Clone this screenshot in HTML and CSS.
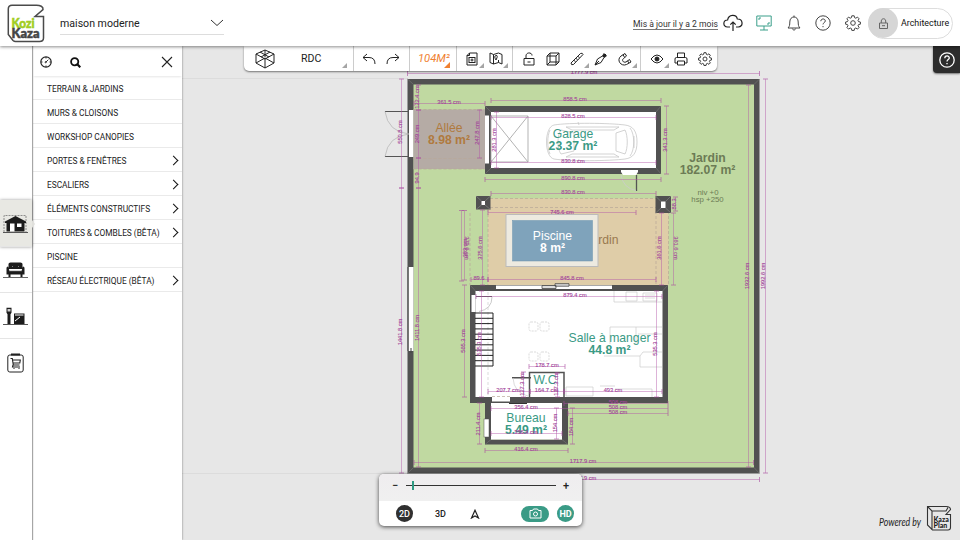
FILE: index.html
```html
<!DOCTYPE html>
<html lang="fr">
<head>
<meta charset="utf-8">
<title>KoziKaza</title>
<link rel="stylesheet" href="styles.css">
</head>
<body>
<svg class="defs" width="0" height="0">
  <defs>
    <symbol id="gear" viewBox="0 0 16 16"><path d="M6.8.8h2.4l.4 1.9 1.2.5 1.7-1.1 1.6 1.7-1.1 1.6.5 1.2 1.900.4v2.200l-1.900.4-.5 1.200 1.100 1.600-1.600 1.700-1.700-1.100-1.200.5-.4 1.900H6.800l-.4-1.900-1.200-.5-1.700 1.100-1.600-1.700L3 10.800l-.5-1.200L.6 9.200V7l1.900-.4L3 5.400 1.900 3.800l1.600-1.700 1.700 1.100 1.200-.5z"/><circle cx="8" cy="8" r="2.300"/></symbol>
    <symbol id="help" viewBox="0 0 16 16"><circle cx="8" cy="8" r="7.200"/><path d="M5.800 6.200c0-3 4.500-2.900 4.500-.2 0 1.500-2.300 1.700-2.300 3.400M8 11v1.200"/></symbol>
  </defs>
</svg>
<header class="header">
  <svg class="logo" viewBox="0 0 40 40">
    <path d="M29.500 1.200H5C2.500 1.200 1.300 2.500 1.300 5v25.500L6 36.500c.8.700 1.500 1 2.500 1h24c2.500 0 4-1.300 4-3.500V12.500H28l8-7c.5-3-3-4.300-6.500-4.300z" fill="#fff" stroke="#4a4a4a" stroke-width="1.500"/>
    <text x="4.500" y="23.800" class="logo-green" textLength="23" lengthAdjust="spacingAndGlyphs">Kozi</text>
    <text x="4.500" y="33.500" class="logo-dark" textLength="28" lengthAdjust="spacingAndGlyphs">Kaza</text>
  </svg>
  <div class="project"><span>maison moderne</span><svg width="14" height="8" viewBox="0 0 14 8"><path d="M1 1l6 5.500L13 1"/></svg></div>
  <div class="actions">
    <span class="updated">Mis à jour il y a 2 mois</span>
    <svg class="cloud" viewBox="0 0 20 18"><path d="M7 13H4.500C-.5 12.500-.2 6 4.600 6 5.500 0 13.500 0 14.300 5c5.700-.2 6.500 7.300 1 8H13M10 17V8M7.300 10.700L10 8l2.700 2.700"/></svg>
    <svg class="screen" viewBox="0 0 16 16"><path d="M.8 1h14.400v10H.8zM8 11v4M4 15h8M3 5V3h2M11 9h2V7"/></svg>
    <svg class="bell" viewBox="0 0 14 16"><path d="M1 13c1.500-1.500 1.800-3 1.800-6C2.800 3.800 4.700 2 7 2s4.200 1.800 4.200 5c0 3 .3 4.500 1.800 6zM7 .5V2M5.300 13.500c.5 2 2.900 2 3.400 0"/></svg>
    <svg class="hicon"><use href="#help"/></svg>
    <svg class="hicon"><use href="#gear"/></svg>
  </div>
  <div class="user"><span class="avatar"><svg width="9" height="11" viewBox="0 0 9 11"><path d="M.5 5h8v5.500h-8zM2.300 5V3c0-3 4.400-3 4.400 0v2M3 7.700h3"/></svg></span><span>Architecture</span></div>
</header>
<main class="main">
  <nav class="rail">
    <a class="rail-item active"><svg width="25" height="20" viewBox="0 0 25 20"><path d="M1 18V1.500h22V18" fill="none" stroke="#666" stroke-width=".7" stroke-dasharray="2 1"/><path d="M2 7.500L12.500 2 23 7.500V9h-1.500v8.500h-18V9H2z" fill="#1c1c1c"/><path d="M7 9.500h4.500v8H7zM14 9.500h4.500V13H14z" fill="#fff"/><path d="M0 18.500h25" stroke="#555"/></svg></a>
    <a class="rail-item"><svg width="25" height="17" viewBox="0 0 25 17"><path d="M5.500 2q0-1.500 2-1.500h10q2 0 2 1.500v5h-14zM3.500 6q0-1.500 1.500-1.500L6.500 9h12L20 4.500q1.500 0 1.500 1.500v6.500h-2V15h-2v-2.500h-10V15h-2v-2.500h-2z" fill="#1c1c1c"/><path d="M6 9h13" stroke="#777" stroke-width=".6"/><path d="M9.500 4v1M15.500 4v1" stroke="#aaa" stroke-width=".7"/><path d="M0 15.500h25" stroke="#666"/></svg></a>
    <a class="rail-item"><svg width="25" height="19" viewBox="0 0 25 19"><path d="M3.500.7h5v5l-1 1.500V17h-3V7.200l-1-1.500z" fill="#1c1c1c"/><path d="M4.500 2h3v2.500h-3z" fill="#ccc"/><path d="M11 6.500h10.500V17H11z" fill="#1c1c1c"/><path d="M12 8h8.500M12 14l5-4" stroke="#fff"/><path d="M0 17.500h25" stroke="#555"/></svg></a>
    <a class="rail-item"><svg width="17" height="20" viewBox="0 0 17 20" fill="none" stroke="#222"><rect x=".8" y="2" width="15.400" height="17" rx="2"/><path d="M4 1.500h9" stroke-width="2"/><path d="M3.500 5.500h1.800l1 6.500h6.200M5.500 7h7.800l-.5 3H6M6 12l-.5 2h7.500" stroke-width="1.100"/><path d="M6.500 15.500h1M11.500 15.500h1"/></svg></a>
  </nav>
  <aside class="panel">
    <div class="panel-top">
      <svg width="12" height="12" viewBox="0 0 12 12" fill="none" stroke="#222"><circle cx="6" cy="6" r="5.200" stroke-width="1.200"/><path d="M6 6l2.300-2.300M6 1v1.500M6 9.500V11M1 6h1.500M9.500 6H11" stroke-width=".9"/><circle cx="5.700" cy="6.200" r=".6"/></svg>
      <svg class="search" width="11" height="11" viewBox="0 0 11 11" fill="none" stroke="#111"><circle cx="4.700" cy="4.700" r="3.600" stroke-width="1.800"/><path d="M7.300 7.300l3 3" stroke-width="2.200"/></svg>
      <svg class="close" width="12" height="12" viewBox="0 0 12 12"><path d="M1 1l10 10M11 1L1 11" stroke="#222" stroke-width="1.100"/></svg>
    </div>
    <ul class="menu">
      <li>TERRAIN &amp; JARDINS</li>
      <li>MURS &amp; CLOISONS</li>
      <li>WORKSHOP CANOPIES</li>
      <li class="more">PORTES &amp; FENÊTRES</li>
      <li class="more">ESCALIERS</li>
      <li class="more">ÉLÉMENTS CONSTRUCTIFS</li>
      <li class="more">TOITURES &amp; COMBLES (BÊTA)</li>
      <li>PISCINE</li>
      <li class="more">RÉSEAU ÉLECTRIQUE (BÊTA)</li>
    </ul>
  </aside>
  <section class="canvas">
    <svg class="plan" viewBox="182 46 778 494">
      <defs>
        <marker id="tick" viewBox="-1 -2.500 2 5" markerWidth="2" markerHeight="5" markerUnits="userSpaceOnUse" orient="auto"><path d="M0-2.500v5" stroke="#a8479f" stroke-width=".8"/></marker>
      </defs>
      <path d="M182 78.500h226M182 473.500h226" stroke="#dcdcdc"/>
      <rect x="407.500" y="79" width="352" height="394.500" fill="#515151"/>
      <rect x="413.500" y="84.500" width="340.500" height="383" fill="#c0d9a1"/>
      <path d="M407.500 79l6 5.500M759.500 79l-5.500 5.500M407.500 473.500l6-6M759.500 473.500l-5.500-6" stroke="#777" stroke-width=".6"/>
      <rect x="409" y="110" width="4.500" height="47" fill="#fff"/>
      <rect x="408.500" y="267" width="5" height="84" fill="#fff"/>
      <path d="M408 267v84M411 348v5" stroke="#444"/>
      <path d="M385 111.500h24M385 156.500h24" stroke="#555"/>
      <path d="M385 111.500Q388 132 409 134Q388 136 385 156.500" fill="none" stroke="#b0b0b0" stroke-width=".7"/>
      <rect x="413.500" y="109.500" width="71.500" height="59.500" fill="#b5aba5"/>
      <path d="M413.500 109.500h71M413.500 158.500h71M413.500 169h71" class="dash"/>

      <rect x="485" y="106" width="176" height="68" fill="#515151"/>
      <rect x="491" y="112" width="165" height="56" fill="#fff"/>
      <path d="M485 106l6 6M661 106l-5 6M485 174l6-6M661 174l-5-6" stroke="#777" stroke-width=".6"/>
      <rect x="485" y="115.500" width="4" height="48" fill="#fff"/>
      <path d="M491 116h37v46h-37zM491 116l37 46M528 116l-37 46" fill="none" stroke="#aaa" stroke-width=".9"/>
      <g fill="none" stroke="#c8c8c8" stroke-width=".8">
        <path d="M554 125c15-2.500 56-2 71 0 8 1 12 6 12 17s-4 16-12 17c-15 2-56 2.500-71 0-10-2-10-32 0-34z"/>
        <path d="M561 130c-4 5-4 19 0 24l13-3v-18zM625 130l-9 3v18l9 3c3-6 3-18 0-24zM566 127h53l-5 3h-42zM566 157h53l-5-3h-42zM630 128c5 6 5 22 0 28M579 125l-1-3M579 159l-1 3M634 136v12M550 130c-3 6-3 18 0 24"/>
      </g>
      <path d="M621 170h17v2l-2 3h-13l-2-3z" fill="#fff"/>
      <path d="M636.500 175v16" stroke="#555" stroke-width="1.300"/><path d="M621 175q2 13 15 15.500" fill="none" stroke="#ccc" stroke-width=".8"/>

      <path d="M488 198.500h168V213h12.500v72.500H488z" fill="#dfcda8"/>
      <path d="M490 198.500h166M490 207.500h166M488 209v76M656 211v74M668.500 211v74" class="dash"/>
      <path d="M470 213v72" class="dash"/>
      <rect x="476" y="196" width="14.500" height="13.500" fill="#515151"/><rect x="481.500" y="201" width="3.500" height="4" fill="#fff"/>
      <rect x="655.500" y="196" width="15.500" height="17" fill="#515151"/><rect x="661" y="201.500" width="4.500" height="6.500" fill="#fff"/>
      <path d="M476 196l5.500 5M490.500 196l-5.500 5M476 209.500l5.500-4.500M490.500 209.500l-5.500-4.500M655.500 196l5.500 5.500M671 196l-5.500 5.500M655.500 213l5.500-5M671 213l-5.500-5" stroke="#888" stroke-width=".6"/>
      <text x="602" y="244" class="room brown">Jardin</text>
      <rect x="506" y="214.500" width="92" height="52" fill="#edeae0" stroke="#bbb"/>
      <rect x="512.500" y="220.500" width="80" height="40.500" fill="#7fa3bb" stroke="#6d93ad" stroke-width=".5"/>

      <rect x="470" y="285" width="198" height="118" fill="#515151"/>
      <rect x="475.500" y="291" width="187" height="106" fill="#fff"/>
      <path d="M470 285l5.500 6M668 285l-5.500 6" stroke="#777" stroke-width=".6"/>
      <rect x="496" y="285.500" width="116" height="4" fill="#fff"/>
      <path d="M496 289.500h116" stroke="#515151" stroke-width="1"/>
      <path d="M542 285.500h14v3h-14zM555 283.700h14v2.500h-14z" fill="#ddd" stroke="#444" stroke-width=".8"/>
      <rect x="471.500" y="295" width="4" height="17" fill="#fff"/>
      <path d="M476 296.500h16" stroke="#555"/><path d="M492 297q0 12-13 14.500" fill="none" stroke="#bbb" stroke-width=".8"/>
      <path d="M488 292v105" class="dash pale"/>
      <path d="M475 313h18M475 318.300h18M475 323.600h18M475 328.900h18M475 334.200h18M475 339.500h18M475 344.800h18M475 350.100h18M475 355.400h18M475 360.700h18M475 366h18M493 313v53" stroke="#222" stroke-width="1"/>
      <g fill="none" stroke="#ccc" stroke-width=".7">
        <g stroke-dasharray="2 1"><rect x="529" y="322" width="9" height="9" rx="2"/><rect x="540" y="322" width="9" height="9" rx="2"/><rect x="529" y="352" width="9" height="9" rx="2"/><rect x="540" y="352" width="9" height="9" rx="2"/></g>
        <path d="M614 291v11h48M626 292h11v9h-11zM643 293h14v8h-14zM645 295h10M645 298h10M610 344v-17h52M636 327v17M662 334h-24M604 356h36v11h22M640 356l3-4h19M566 387h27v9h-27zM600 386h15M615 389h37v8"/>
        <path d="M557 407h5v22h-5M535 412h14v10h-14z" stroke-dasharray="2 1"/>
      </g>
      <path d="M529.500 397v-24.500h34.500v24.500M512 377.700h19" fill="none" stroke="#515151" stroke-width="1.500"/>
      <path d="M513 378q1 15 15 18" fill="none" stroke="#ccc" stroke-width=".7"/>

      <path d="M485 403h6v36.500h71V403h6v41.500h-83z" fill="#515151"/>
      <rect x="491" y="403" width="71" height="36.500" fill="#fff"/>
      <path d="M485 444.500l6-5M568 444.500l-6-5" stroke="#777" stroke-width=".6"/>
      <rect x="484" y="419" width="5" height="18" fill="#fff" stroke="#555" stroke-width=".5"/>
      <rect x="492" y="397" width="18" height="4.500" fill="#fff"/><path d="M492 396.500h18" class="dash"/><path d="M509 403.500h18" stroke="#333"/>

      <g class="room">
        <text x="449" y="131.500" fill="#b07a3e">Allée</text><text x="449" y="143.500" fill="#b07a3e" class="b">8.98 m²</text>
        <text x="573" y="138">Garage</text><text x="573" y="150" class="b">23.37 m²</text>
        <text x="707.500" y="162" fill="#6c7b55" class="b">Jardin</text><text x="707.500" y="174" fill="#6c7b55" class="b">182.07 m²</text>
        <text x="708" y="195" fill="#6c7b55" class="s">niv +0</text><text x="707.500" y="202.300" fill="#6c7b55" class="s">hsp +250</text>
        <text x="552.500" y="239.500" fill="#fff">Piscine</text><text x="552.500" y="251.500" fill="#fff" class="b">8 m²</text>
        <text x="609.500" y="342">Salle à manger</text><text x="609.500" y="354" class="b">44.8 m²</text>
        <text x="545" y="383.500">W.C</text>
        <text x="526" y="421.500">Bureau</text><text x="526" y="433.500" class="b">5.49 m²</text>
      </g>

      <g class="dim">
        <path d="M407.500 73.500H759.500"/><path d="M401.500 79V188"/><path d="M401.500 188V473"/><path d="M765.500 79V473"/><path d="M748.500 85V467"/><path d="M414 462.500H753.500"/><path d="M414 103.500H485"/><path d="M491 100.500H661"/><path d="M491 117.500H656"/><path d="M491 162.500H656"/><path d="M485 179.500H661"/><path d="M491 193.500H656"/><path d="M418.500 85V110"/><path d="M418.500 110V158"/><path d="M418.500 158V188"/><path d="M418.500 188V467"/><path d="M479.500 110V158"/><path d="M496.500 112V168"/><path d="M666.500 106V174"/><path d="M488 212.500H636"/><path d="M471 279.500H488"/><path d="M488 279.500H656"/><path d="M464.500 210.500V280"/><path d="M461.500 210.500V281"/><path d="M482.500 210V285"/><path d="M661.500 213V285"/><path d="M673.500 213V285"/><path d="M675.500 197V211"/><path d="M464.500 285V397"/><path d="M481.500 291V397"/><path d="M656.500 291V397"/><path d="M476 296.500H662"/><path d="M529 366.500H565"/><path d="M488 391.500H530"/><path d="M530 391.500H564"/><path d="M564 391.500H662"/><path d="M564 403.500H668"/><path d="M491 408.500H668"/><path d="M568 413.500H668"/><path d="M491 433.500H562"/><path d="M485 450.500H568"/><path d="M479.500 403V444"/><path d="M556.500 408V439"/><path d="M572.500 408V444"/><path d="M523.500 372V397"/><path d="M557.500 373V397"/><path d="M407.500 479.500H759.500"/>
        <g class="h">
          <text x="584" y="74">1777.9 cm</text><text x="449" y="104">361.5 cm</text><text x="575" y="101">858.5 cm</text><text x="573" y="118">828.5 cm</text><text x="573" y="163">830.8 cm</text><text x="573" y="179.500">890.8 cm</text><text x="573" y="194.300">830.8 cm</text><text x="562" y="213.500">745.6 cm</text><text x="479" y="280">89.6</text><text x="572" y="280">845.8 cm</text><text x="575" y="296.500">879.4 cm</text><text x="547" y="366.800">178.7 cm</text><text x="508" y="392">207.7 cm</text><text x="546.500" y="392">164.7 cm</text><text x="613" y="392">493 cm</text><text x="618" y="403.500">508 cm</text><text x="618" y="409">508 cm</text><text x="618" y="414">508 cm</text><text x="526" y="409">356.4 cm</text><text x="526" y="434">356.4 cm</text><text x="526" y="450.500">416.4 cm</text><text x="583" y="463">1717.9 cm</text><text x="583" y="479.500">1777.9 cm</text>
          <text transform="translate(402 132)rotate(-90)">550.8 cm</text><text transform="translate(402 332)rotate(-90)">1441.8 cm</text><text transform="translate(418.500 97)rotate(-90)">122.4 cm</text><text transform="translate(418.500 134)rotate(-90)">249 cm</text><text transform="translate(418.500 178)rotate(-90)">94.9</text><text transform="translate(418.500 328)rotate(-90)">1411.8 cm</text><text transform="translate(479 133)rotate(-90)">247.8 cm</text><text transform="translate(496 140)rotate(-90)">281.3 cm</text><text transform="translate(667 140)rotate(-90)">341.3 cm</text><text transform="translate(676 204)rotate(-90)">88.3</text><text transform="translate(482 248)rotate(-90)">375.6 cm</text><text transform="translate(465 248)rotate(90)">379.6 cm</text><text transform="translate(466.500 248)rotate(-90)">383 cm</text><text transform="translate(661 248)rotate(-90)">361.6 cm</text><text transform="translate(674 248)rotate(90)">361.6 cm</text><text transform="translate(464.500 341)rotate(-90)">565.3 cm</text><text transform="translate(481 344)rotate(-90)">535.3 cm</text><text transform="translate(656.500 344)rotate(-90)">535.3 cm</text><text transform="translate(523.500 384)rotate(-90)">127.3 cm</text><text transform="translate(557.500 384)rotate(-90)">127.3 cm</text><text transform="translate(479.500 424)rotate(-90)">211.4 cm</text><text transform="translate(556.500 423)rotate(-90)">154 cm</text><text transform="translate(572.500 427)rotate(-90)">184 cm</text><text transform="translate(748.500 276)rotate(-90)">1932.6 cm</text><text transform="translate(765 276)rotate(-90)">1992.6 cm</text>
        </g>
      </g>
    </svg>

    <div class="toolbar">
      <div class="group level"><svg width="22" height="20" viewBox="0 0 22 20"><path d="M11 1L2 5v9l9 5 9-5V5zM2 5l9 5 9-5M11 10v9M11 1v7M2 14l9-5 9 5M6 3l9 5M16 3L7 8"/></svg><span>RDC</span><i class="corner"></i></div>
      <div class="group undo">
        <span class="tool"><svg width="14" height="12" viewBox="0 0 14 12"><path d="M5 1L1 4.500l4 3.500M1 4.500h6q6 0 6 6.500"/></svg></span>
        <span class="tool"><svg width="14" height="12" viewBox="0 0 14 12"><path d="M9 1l4 3.500L9 8M13 4.500H7q-6 0-6 6.500"/></svg></span>
      </div>
      <div class="group area"><span>104M²</span><i class="corner"></i></div>
      <div class="group docs">
        <span class="tool"><svg width="12" height="14" viewBox="0 0 12 14"><path d="M3.500 1H11v12H1V3.500zM3.500 1v2.500H1"/><rect x="3" y="5.500" width="6" height="5"/><circle cx="6" cy="8" r="1"/></svg><i class="corner"></i></span>
        <span class="tool"><svg width="14" height="13" viewBox="0 0 14 13"><path d="M1 1l3.500 1.500L9.500 1 13 2.500V12l-3.500-1.500-5 1.500L1 10.500zM4.500 2.500V12M9.500 8v2.500M7 8Q4.500 4 7 3.500T7 8"/></svg><i class="corner"></i></span>
      </div>
      <div class="group tools">
        <span class="tool"><svg width="12" height="14" viewBox="0 0 12 14"><path d="M1 6.500h10V13H1zM3 6.500V4c0-4 6-4 6-.5M4.500 10h3"/></svg></span>
        <span class="tool"><svg width="14" height="14" viewBox="0 0 14 14"><path d="M1 4h9v9H1zM4 1h9v9H4zM1 4l3-3M10 4l3-3M1 13l3-3M10 13l3-3"/></svg></span>
        <span class="tool"><svg width="14" height="14" viewBox="0 0 14 14"><path d="M1 11L10.500 1.500q2-1 2.500 1L3.500 12.500Q1 13.500 1 11zM4 8.500l1.500 1M6 6.500l1.500 1M8 4.500l1.500 1"/></svg><i class="corner"></i></span>
        <span class="tool"><svg width="14" height="14" viewBox="0 0 14 14"><path d="M1 13L3.500 7l5-3 1.500 1.500-3 5zM8.500 4L10 1.500 12.500 4 10 5.500M1 13l4-4"/><path d="M9 4l2-2 1 1-2 2z" fill="#222"/></svg></span>
        <span class="tool"><svg width="14" height="14" viewBox="0 0 14 14"><path d="M7 1.500L3 4C-2 8 3 15 8.500 12.500L13 10 11.500 7.500 8 10C5 11 3.500 8 5.500 6.500L8.500 4zM5 2.800l1.500 2.400M9.500 8.800L11 11"/></svg><i class="corner"></i></span>
      </div>
      <div class="group views">
        <span class="tool"><svg width="14" height="10" viewBox="0 0 14 10"><path d="M1 5q6-8 12 0-6 8-12 0z"/><circle cx="7" cy="5" r="2" fill="#222"/></svg><i class="corner"></i></span>
        <span class="tool"><svg width="14" height="14" viewBox="0 0 14 14"><path d="M3.500 5.500V1h7v4.500M3.500 11H1V7q0-1.500 1.500-1.500h9Q13 5.500 13 7v4h-2.500M3.500 9h7v4h-7z"/></svg></span>
        <span class="tool"><svg width="14" height="14"><use href="#gear"/></svg></span>
      </div>
    </div>

    <div class="help"><svg width="16" height="16"><use href="#help"/></svg></div>

    <div class="viewbar">
      <div class="zoom"><span>−</span><div class="track"><i></i></div><span>+</span></div>
      <div class="modes">
        <b class="mode on">2D</b><b class="mode">3D</b>
        <svg class="compass" width="10" height="10" viewBox="0 0 10 10"><path d="M1.500 9L5 1.200 8.500 9 5 7z"/></svg>
        <span class="photo"><svg width="13" height="11" viewBox="0 0 13 11"><path d="M1 2.500h2.500L4.500 1h4l1 1.500H12V10H1z"/><circle cx="6.500" cy="6" r="2"/></svg></span>
        <b class="mode hd">HD</b>
      </div>
    </div>

    <div class="powered">
      <svg width="44" height="14" viewBox="0 0 44 14"><text x="1" y="10.500" class="script" textLength="42" lengthAdjust="spacingAndGlyphs">Powered by</text></svg>
      <svg width="26" height="27" viewBox="0 0 26 27"><path d="M1.500 1.500H20q4.500 0 4.500 3L20 9.500h4.500v13q0 2.500-2.500 2.500H6.500L1.500 20zM1.500 1.500L6 6v19M6 6h14l2-3.500" fill="none" stroke="#333" stroke-width="1.100"/><text x="7.500" y="17.300">Kaza</text><text x="7.500" y="23.300">Plan</text></svg>
    </div>
  </section>
</main>
</body>
</html>
```
FILE: styles.css
```css
* { box-sizing: border-box; }
body {
  margin: 0;
  width: 960px;
  height: 540px;
  overflow: hidden;
  display: flex;
  flex-direction: column;
  background: #e7e7e7;
  color: #222;
  font-family: Roboto, "Liberation Sans", sans-serif;
}
.defs { position: absolute; }

.header {
  position: relative;
  z-index: 3;
  flex: none;
  height: 46px;
  display: flex;
  align-items: center;
  padding: 0 7px;
  background: #fff;
  box-shadow: 0 1px 3px rgba(0, 0, 0, .45);
}
.logo { width: 40px; height: 40px; margin-top: 1px; }
.logo text { font: 900 12.5px Lato, sans-serif; stroke-width: .5; }
.logo-green { fill: #a1cd22; stroke: #a1cd22; }
.logo-dark { fill: #454545; stroke: #454545; }
.project {
  width: 164px;
  height: 24px;
  margin-left: 13px;
  display: flex;
  align-items: center;
  justify-content: space-between;
  border-bottom: 1px solid #ddd;
  font-size: 10.6px;
  color: #222;
}
.project span { padding-top: 1px; }
.project svg { fill: none; stroke: #333; }
.actions {
  margin-left: auto;
  display: flex;
  align-items: center;
  gap: 14px;
}
.actions svg, .user svg { fill: none; stroke: #444; stroke-width: 1; }
.updated { font-size: 8.6px; line-height: 10px; margin-top: 2px; border-bottom: 1px solid #777; margin-right: -9px; color: #333; white-space: nowrap; }
.cloud { width: 20px; height: 18px; margin-right: -1px; }
.actions .cloud { stroke: #222; stroke-width: 1.2; }
.actions .screen { width: 16px; height: 16px; margin-right: 1px; stroke: #3a9f8a; }
.bell { width: 14px; height: 16px; }
.hicon { width: 16px; height: 16px; }
.user {
  width: 85px;
  height: 31px;
  margin-left: 7px;
  display: flex;
  align-items: center;
  border: 1px solid #ddd;
  border-radius: 16px;
  font-size: 8.9px;
  white-space: nowrap;
  color: #111;
}
.user .avatar svg { stroke: #666; }
.avatar {
  flex: none;
  width: 30px;
  height: 30px;
  margin-left: -1px;
  margin-right: 3px;
  display: flex;
  align-items: center;
  justify-content: center;
  border-radius: 50%;
  background: #d6d6d6;
}

.main { flex: 1; display: flex; min-height: 0; }
.rail {
  position: relative;
  z-index: 2;
  width: 32px;
  padding-top: 154px;
  background: #fff;
  box-shadow: 1px 0 1px rgba(0, 0, 0, .35);
}
.rail-item {
  height: 46px;
  padding: 2px 1px 0 0;
  display: flex;
  align-items: center;
  justify-content: center;
  border-bottom: 1px solid #e5e5e5;
}
.rail-item:last-child { border: 0; }
.rail-item.active { position: relative; height: 47px; background: #e8e8e3; box-shadow: 0 0 3px rgba(0, 0, 0, .4); }
.rail-item.active::after {
  content: "";
  position: absolute;
  left: 32px;
  top: 20px;
  border: 4px solid transparent;
  border-left: 3px solid #e0e0dc;
  border-right: 0;
}
.panel {
  position: relative;
  z-index: 1;
  width: 150px;
  padding-left: 1px;
  background: #fff;
  box-shadow: 0 0 2px rgba(0, 0, 0, .5);
}
.panel-top {
  height: 30px;
  display: flex;
  align-items: center;
  padding: 2px 9px 0 7px;
  box-shadow: 0 2px 2px -1px rgba(0, 0, 0, .1);
}
.search { margin-left: 18px; }
.close { margin-left: auto; }
.menu { margin: 0; padding: 0; list-style: none; }
.menu li {
  height: 24px;
  padding: 2px 5px 0 14px;
  display: flex;
  align-items: center;
  border-bottom: 1px solid #eaeaea;
  font-size: 8.35px;
  letter-spacing: -.02px;
  white-space: nowrap;
}
.menu .more::after {
  content: "";
  width: 6px;
  height: 6px;
  margin-left: auto;
  border: solid #111;
  border-width: 1.8px 1.8px 0 0;
  transform: rotate(45deg);
}

.canvas { position: relative; flex: 1; }
.plan { display: block; width: 778px; height: 494px; }
.dash { fill: none; stroke: #b8a898; stroke-width: .7; stroke-dasharray: 3 2; }
.pale { stroke: #ccc; }
.room { font: 12.2px "Liberation Sans", sans-serif; text-anchor: middle; fill: #3a9a85; }
.room .b { font-weight: bold; }
.room .s { font-size: 7.8px; }
.brown { fill: #9a7a50; }
.dim > path { fill: none; stroke: #b455a8; stroke-width: .6; opacity: .75; marker-start: url(#tick); marker-end: url(#tick); }
.dim .h { font: 5.7px "Liberation Sans", sans-serif; text-anchor: middle; fill: #a3459a; stroke: #a3459a; stroke-width: .12; }

.toolbar {
  position: absolute;
  left: 62px;
  top: 0;
  width: 473px;
  height: 25px;
  display: flex;
  background: #fff;
  border-radius: 0 0 5px 5px;
  box-shadow: 0 1px 2px rgba(0, 0, 0, .5);
}
.toolbar svg { fill: none; stroke: #222; stroke-width: 1; }
.group { position: relative; display: flex; align-items: center; border-right: 1px solid #ccc; }
.group:last-child { border: 0; }
.level { width: 110px; padding-left: 10px; gap: 25px; font-size: 10.6px; }
.undo { width: 56px; padding-left: 3px; }
.area { width: 47px; padding-left: 8px; font-size: 11.2px; font-style: italic; color: #f08030; }
.docs { width: 56px; padding-left: 3px; }
.tools { width: 128px; padding-left: 4px; }
.views { flex: 1; padding-left: 4px; }
.tool { position: relative; width: 24px; height: 25px; display: flex; align-items: center; justify-content: center; }
.corner {
  position: absolute;
  right: 0;
  bottom: 3px;
  width: 5px;
  height: 5px;
  background: #a5a5a5;
  clip-path: polygon(100% 0, 100% 100%, 0 100%);
}
.level .corner { right: 6px; }
.area .corner { right: 6px; width: 6px; height: 6px; background: #f08030; }

.help {
  position: absolute;
  right: 0;
  top: 0;
  width: 27px;
  height: 27px;
  display: flex;
  align-items: center;
  justify-content: center;
  background: #2d2d2d;
  border-radius: 0 0 0 4px;
  box-shadow: 0 1px 2px rgba(0, 0, 0, .5);
}
.help svg { fill: none; stroke: #fff; stroke-width: 1.3; }

.viewbar {
  position: absolute;
  left: 197px;
  top: 428px;
  width: 203px;
  height: 52px;
  border-radius: 5px;
  overflow: hidden;
  background: #fff;
  box-shadow: 0 1px 4px rgba(0, 0, 0, .7);
}
.zoom {
  height: 27px;
  padding: 0 13px 4px;
  display: flex;
  align-items: center;
  justify-content: space-between;
  background: linear-gradient(#efedef, #f0f0f0);
  font-size: 11px;
  font-weight: 500;
}
.track { position: relative; width: 150px; height: 1px; background: #333; }
.track i { position: absolute; left: 6px; top: -4px; width: 2.5px; height: 9px; background: #2d9a82; }
.modes { height: 25px; padding: 0 8px 0 17px; display: flex; align-items: center; }
.mode { width: 17px; height: 17px; border-radius: 50%; font-size: 9px; line-height: 18px; text-align: center; font-weight: 500; }
.mode.on { margin-right: 19px; background: #303030; color: #fff; }
.compass { margin-left: 21px; fill: none; stroke: #222; stroke-width: 1.2; }
.photo {
  width: 28px;
  height: 16px;
  margin-left: auto;
  margin-right: 8px;
  display: flex;
  align-items: center;
  justify-content: center;
  border-radius: 8px;
  background: #3a9b86;
}
.photo svg { fill: none; stroke: #fff; }
.mode.hd { background: #3a9b86; color: #fff; font-weight: 700; }

.powered {
  position: absolute;
  right: 8px;
  bottom: 8px;
  display: flex;
  align-items: center;
  gap: 4px;
}
.powered svg:first-child { margin-top: 7px; }
.powered text { font: 900 7px Lato, sans-serif; fill: #222; }
.powered .script { font: italic 10.5px Lato, cursive; }
```
